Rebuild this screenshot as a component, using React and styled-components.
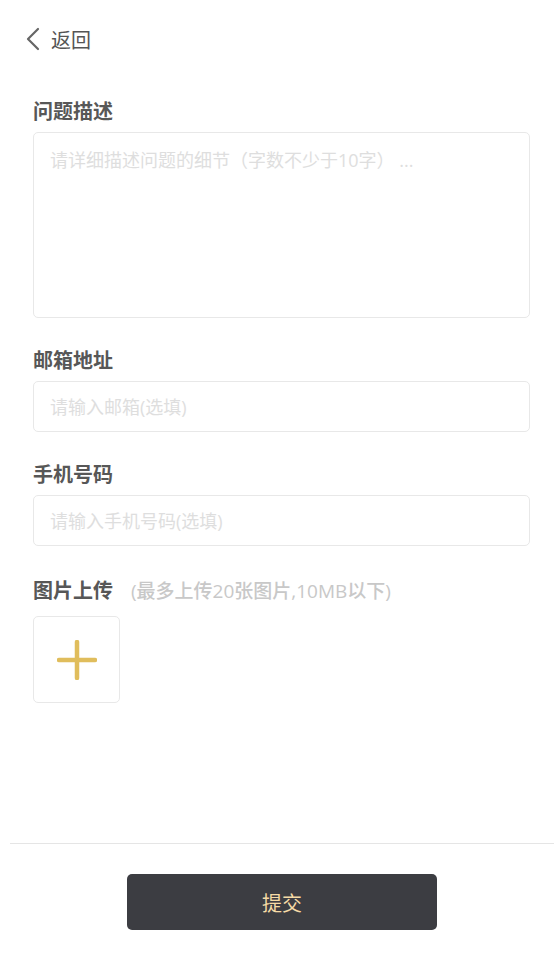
import React from "react";
import styled, { createGlobalStyle } from "styled-components";

const Global = createGlobalStyle`
  html, body { margin: 0; padding: 0; background: #fff; }
  body { font-family: "Open Sans", "Noto Sans CJK SC", sans-serif; }
  * { box-sizing: border-box; }
`;

const Page = styled.div`
  width: 560px;
  height: 955px;
  display: flex;
  flex-direction: column;
  background: #fff;
`;

const Header = styled.div`
  display: flex;
  align-items: center;
  gap: 10px;
  height: 40px;
  margin-top: 19px;
  padding-left: 25px;
  color: #555;
  font-size: 20px;
`;

const Form = styled.div`
  flex: 1;
  display: flex;
  flex-direction: column;
  padding: 40px 30px 0 33px;
`;

const Label = styled.div`
  display: flex;
  align-items: baseline;
  gap: 18px;
  font-size: 20px;
  font-weight: 700;
  color: #575757;
  line-height: 26px;
  height: 26px;
  margin-top: ${(p) => p.$top || 0}px;
  margin-bottom: 7px;
`;

const Hint = styled.span`
  font-size: 19px;
  font-weight: 500;
  color: #c8c8c8;
`;

const TextArea = styled.textarea`
  display: block;
  width: 100%;
  height: 186px;
  border: 1px solid #e8e8e8;
  border-radius: 5px;
  padding: 14px 16px;
  resize: none;
  outline: none;
  font-family: inherit;
  font-size: 18px;
  line-height: 26px;
  color: #333;
  &::placeholder { color: #dedede; }
`;

const Input = styled.input`
  display: block;
  width: 100%;
  height: 51px;
  border: 1px solid #e8e8e8;
  border-radius: 5px;
  padding: 0 16px;
  outline: none;
  font-family: inherit;
  font-size: 18px;
  color: #333;
  &::placeholder { color: #dedede; }
`;

const Upload = styled.div`
  width: 87px;
  height: 87px;
  border: 1px solid #e8e8e8;
  border-radius: 5px;
  display: flex;
  align-items: center;
  justify-content: center;
  margin-top: 5px;
`;

const Footer = styled.div`
  border-top: 1px solid #e5e5e5;
  margin: 0 6px 0 10px;
  height: 112px;
  display: flex;
  justify-content: center;
  padding-top: 30px;
`;

const Submit = styled.button`
  width: 310px;
  height: 56px;
  border: none;
  border-radius: 5px;
  background: #3c3d42;
  color: #f6dba6;
  font-family: inherit;
  font-size: 20px;
`;

export default function App() {
  return (
    <Page>
      <Global />
      <Header>
        <svg width="16" height="24" viewBox="0 0 16 24">
          <path d="M13 2 L3 12 L13 22" fill="none" stroke="#666" strokeWidth="2.2" strokeLinecap="round" strokeLinejoin="round" />
        </svg>
        <span>返回</span>
      </Header>
      <Form>
        <Label>问题描述</Label>
        <TextArea placeholder="请详细描述问题的细节（字数不少于10字） ..." />
        <Label $top={30}>邮箱地址</Label>
        <Input placeholder="请输入邮箱(选填)" />
        <Label $top={30}>手机号码</Label>
        <Input placeholder="请输入手机号码(选填)" />
        <Label $top={32}>
          图片上传<Hint>(最多上传20张图片,10MB以下)</Hint>
        </Label>
        <Upload>
          <svg width="40" height="40" viewBox="0 0 40 40">
            <path d="M20 2 V38 M2 20 H38" stroke="#e0bd5c" strokeWidth="4.5" strokeLinecap="round" />
          </svg>
        </Upload>
      </Form>
      <Footer>
        <Submit>提交</Submit>
      </Footer>
    </Page>
  );
}
